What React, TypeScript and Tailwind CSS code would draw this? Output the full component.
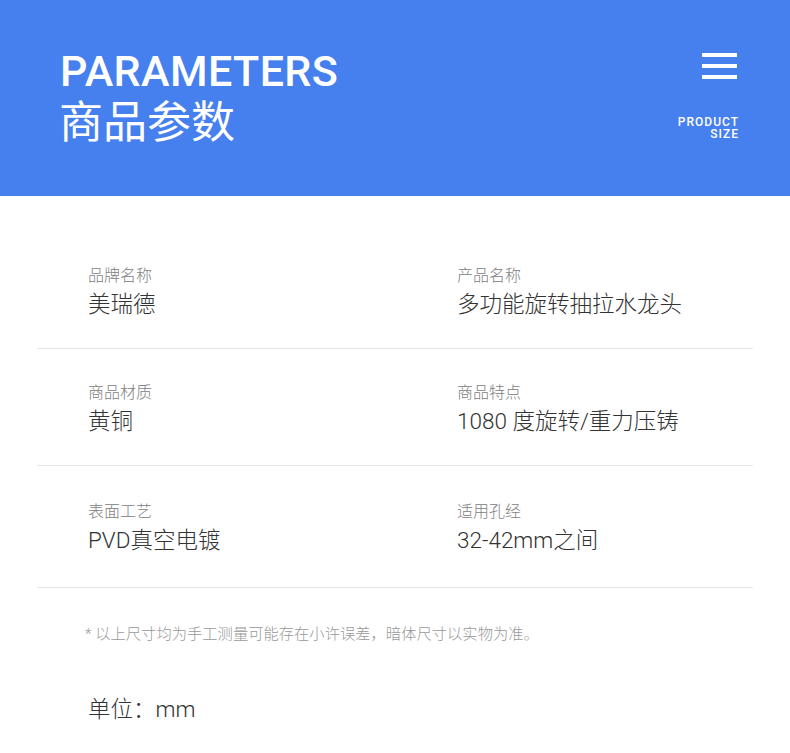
import React from "react";

const rows = [
  [
    { label: "品牌名称", value: "美瑞德" },
    { label: "产品名称", value: "多功能旋转抽拉水龙头" },
  ],
  [
    { label: "商品材质", value: "黄铜" },
    { label: "商品特点", value: "1080 度旋转/重力压铸" },
  ],
  [
    { label: "表面工艺", value: "PVD真空电镀" },
    { label: "适用孔经", value: "32-42mm之间" },
  ],
];

export default function App() {
  return (
    <div
      className="w-[790px] h-[753px] bg-white overflow-hidden"
      style={{ fontFamily: 'Roboto, "Noto Sans CJK SC", sans-serif' }}
    >
      <header className="h-[196px] bg-[#4680ee] flex justify-between pl-[60px] pr-[51px] text-white">
        <div className="pt-[48px]">
          <div className="text-[43px] leading-[46px] font-medium tracking-[0.4px]">
            PARAMETERS
          </div>
          <div
            className="text-[44px] leading-[50px] -ml-[1px]"
            style={{ fontFamily: '"Noto Sans CJK SC", sans-serif' }}
          >
            商品参数
          </div>
        </div>
        <div className="flex flex-col items-end pt-[53px]">
          <div className="flex flex-col gap-[7px] mr-[2px]">
            <div className="w-[35px] h-[4px] bg-white" />
            <div className="w-[35px] h-[4px] bg-white" />
            <div className="w-[35px] h-[4px] bg-white" />
          </div>
          <div className="mt-[37px] text-right text-[12px] leading-[12px] font-medium tracking-[1px]">
            <div>PRODUCT</div>
            <div>SIZE</div>
          </div>
        </div>
      </header>

      <div className="mx-[37px] pt-[36px]">
        {rows.map((row, i) => (
          <div
            key={i}
            className={`grid grid-cols-[369px_1fr] pl-[51px] border-b border-[#e6e6e6] ${
              i === 2 ? "pt-[36px] pb-[32px]" : "pt-[34px] pb-[29px]"
            }`}
          >
            {row.map((c) => (
              <div key={c.label}>
                <div className="text-[16px] leading-[20px] font-light text-[#808080]">{c.label}</div>
                <div className="mt-[3px] text-[22.5px] leading-[30px] font-light text-[#333333]">
                  {c.value}
                </div>
              </div>
            ))}
          </div>
        ))}
        <div className="pl-[48px] pt-[36px] text-[15.3px] leading-[20px] font-light text-[#999999]">
          * 以上尺寸均为手工测量可能存在小许误差，暗体尺寸以实物为准。
        </div>
        <div className="pl-[51px] mt-[50px] text-[22.5px] leading-[30px] font-light text-[#333333]">
          单位：mm
        </div>
      </div>
    </div>
  );
}
